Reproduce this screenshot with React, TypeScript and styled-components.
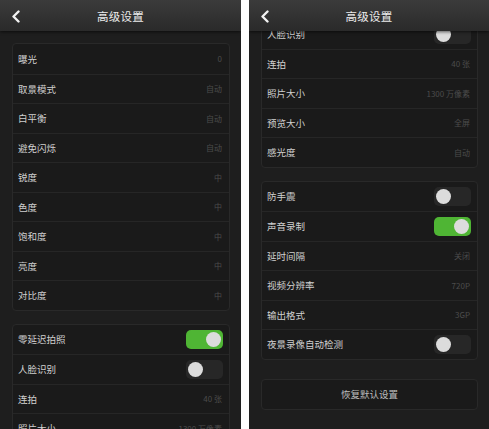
import React from "react";
import styled, { createGlobalStyle } from "styled-components";

const Global = createGlobalStyle`
  html, body { margin: 0; padding: 0; background: #ffffff; }
  body { font-family: "Noto Sans CJK SC", "Noto Sans", sans-serif; }
`;

const Screens = styled.div`
  display: flex;
  gap: 8px;
  width: 489px;
  height: 429px;
`;

const Phone = styled.div<{ $w: number }>`
  width: ${(p) => p.$w}px;
  height: 429px;
  flex-shrink: 0;
  display: flex;
  flex-direction: column;
  background: #1e1e1e;
  overflow: hidden;
`;

const Header = styled.div`
  position: relative;
  z-index: 2;
  height: 31px;
  flex-shrink: 0;
  display: flex;
  align-items: center;
  justify-content: center;
  background: linear-gradient(#3b3b3b, #2a2a2a);
  box-shadow: 0 1px 3px rgba(0, 0, 0, 0.6);
`;

const Back = styled.svg`
  position: absolute;
  left: 11px;
  top: 10px;
`;

const Title = styled.div`
  color: #ececec;
  font-size: 11.5px;
  letter-spacing: 0.2px;
`;

const Viewport = styled.div`
  flex: 1;
  overflow: hidden;
`;

const List = styled.div<{ $scroll: number }>`
  margin-top: ${(p) => -p.$scroll}px;
  padding: 12px 11px 22px 12px;
  display: flex;
  flex-direction: column;
`;

const Card = styled.div<{ $gap: number }>`
  margin-top: ${(p) => p.$gap}px;
  background: #1a1a1a;
  border: 1px solid #292929;
  border-radius: 4px;
  display: flex;
  flex-direction: column;
`;

const Row = styled.div`
  height: 29.5px;
  box-sizing: border-box;
  display: flex;
  align-items: center;
  justify-content: space-between;
  padding: 0 7px 0 5px;
  & + & {
    border-top: 1px solid #262626;
  }
`;

const Label = styled.span`
  color: #d0d0d0;
  font-size: 9.5px;
`;

const Value = styled.span`
  color: #4c4c4c;
  font-size: 8px;
`;

const Toggle = styled.div<{ $on: boolean }>`
  width: 37px;
  height: 19px;
  margin-right: -1px;
  border-radius: 5px;
  box-sizing: border-box;
  padding: 2px;
  display: flex;
  justify-content: ${(p) => (p.$on ? "flex-end" : "flex-start")};
  align-items: center;
  background: ${(p) => (p.$on ? "#4fb534" : "#272727")};
`;

const Knob = styled.div`
  width: 15px;
  height: 15px;
  border-radius: 50%;
  background: #dcdcdc;
`;

const ButtonCard = styled.div`
  margin-top: 19px;
  height: 29px;
  background: #1a1a1a;
  border: 1px solid #292929;
  border-radius: 4px;
  display: flex;
  align-items: center;
  justify-content: center;
  color: #bdbdbd;
  font-size: 9.5px;
`;

type Item = { label: string; value?: string; toggle?: boolean };

const groups: { gap: number; items: Item[] }[] = [
  {
    gap: 0,
    items: [
      { label: "曝光", value: "0" },
      { label: "取景模式", value: "自动" },
      { label: "白平衡", value: "自动" },
      { label: "避免闪烁", value: "自动" },
      { label: "锐度", value: "中" },
      { label: "色度", value: "中" },
      { label: "饱和度", value: "中" },
      { label: "亮度", value: "中" },
      { label: "对比度", value: "中" },
    ],
  },
  {
    gap: 13,
    items: [
      { label: "零延迟拍照", toggle: true },
      { label: "人脸识别", toggle: false },
      { label: "连拍", value: "40 张" },
      { label: "照片大小", value: "1300 万像素" },
      { label: "预览大小", value: "全屏" },
      { label: "感光度", value: "自动" },
    ],
  },
  {
    gap: 13,
    items: [
      { label: "防手震", toggle: false },
      { label: "声音录制", toggle: true },
      { label: "延时间隔", value: "关闭" },
      { label: "视频分辨率", value: "720P" },
      { label: "输出格式", value: "3GP" },
      { label: "夜景录像自动检测", toggle: false },
    ],
  },
];

function Screen({ width, scroll }: { width: number; scroll: number }) {
  return (
    <Phone $w={width}>
      <Header>
        <Back width="10" height="13" viewBox="0 0 10 13">
          <path d="M7.5 1.5 L2.5 6.5 L7.5 11.5" fill="none" stroke="#f2f2f2" strokeWidth="2.4" strokeLinecap="round" strokeLinejoin="round" />
        </Back>
        <Title>高级设置</Title>
      </Header>
      <Viewport>
        <List $scroll={scroll}>
          {groups.map((g, gi) => (
            <Card key={gi} $gap={g.gap}>
              {g.items.map((it) => (
                <Row key={it.label}>
                  <Label>{it.label}</Label>
                  {it.toggle !== undefined ? (
                    <Toggle $on={it.toggle}>
                      <Knob />
                    </Toggle>
                  ) : (
                    <Value>{it.value}</Value>
                  )}
                </Row>
              ))}
            </Card>
          ))}
          <ButtonCard>恢复默认设置</ButtonCard>
        </List>
      </Viewport>
    </Phone>
  );
}

export default function App() {
  return (
    <>
      <Global />
      <Screens>
        <Screen width={241} scroll={0} />
        <Screen width={240} scroll={335} />
      </Screens>
    </>
  );
}
